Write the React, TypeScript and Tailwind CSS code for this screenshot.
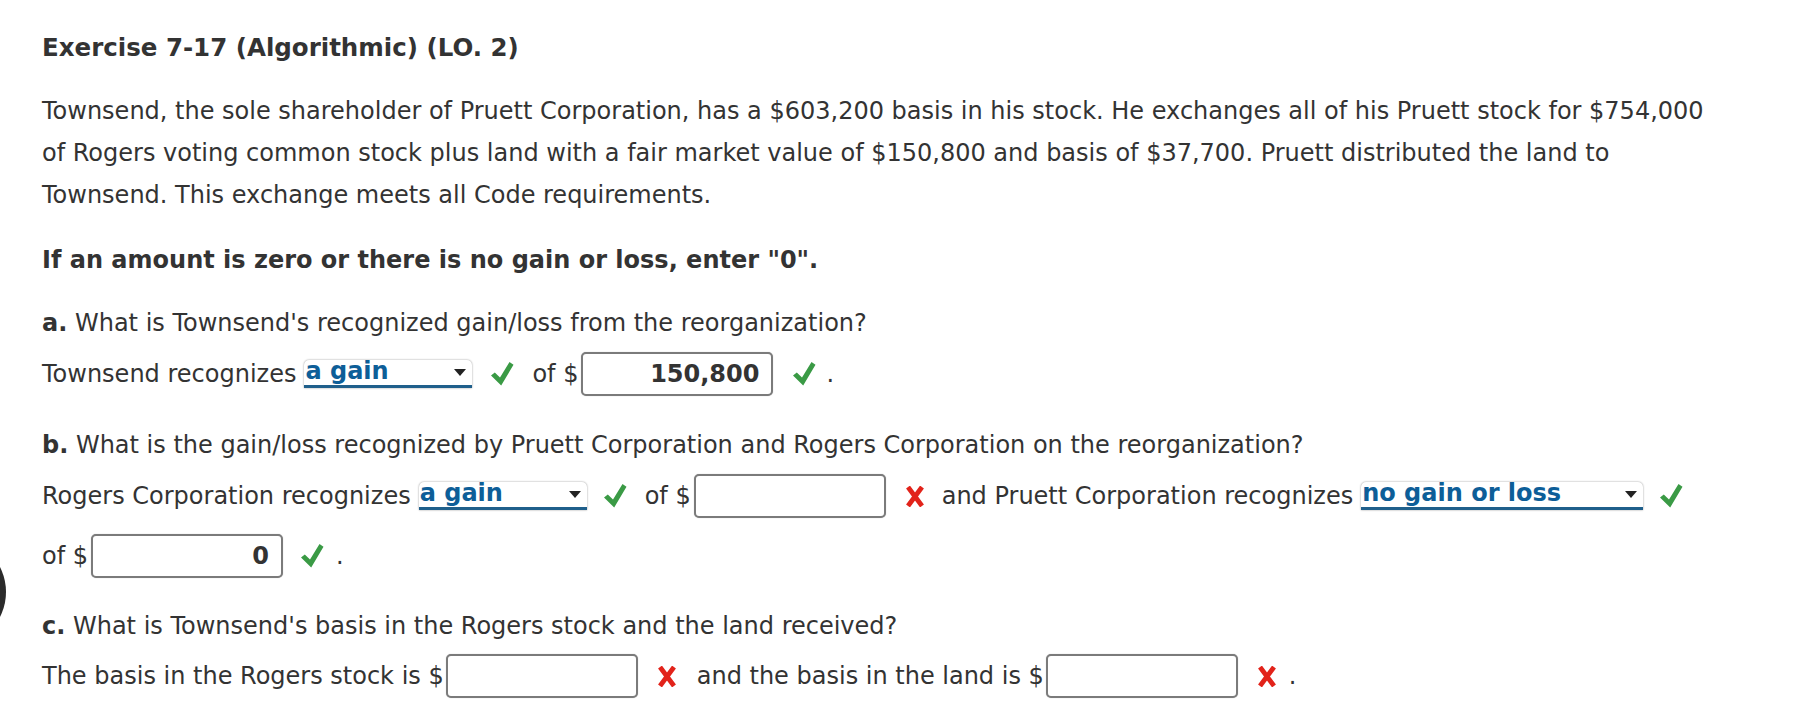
import React from "react";

const font = { fontFamily: '"DejaVu Sans", Verdana, sans-serif' };

function Check() {
  return (
    <svg width="23" height="24" viewBox="0 0 23 24" className="shrink-0">
      <path d="M0 13.5 L3.8 10.5 L9 15.5 L18.5 0 L22.5 2.8 L10.2 23.5 Z" fill="#3a9a45" />
    </svg>
  );
}

function Cross() {
  return (
    <svg width="18" height="21" viewBox="0 0 18 21" className="shrink-0">
      <path d="M2 1 L16 20 M16 1 L2 20" stroke="#e2231a" strokeWidth="4.8" />
    </svg>
  );
}

function Select({ value, width }: { value: string; width: string }) {
  return (
    <div
      className={`relative ${width} h-[28px] bg-white rounded-t-[5px] shadow-[0_0_2px_rgba(0,0,0,0.45)] border-b-[3px] border-[#1f5f8b] flex items-center pl-[1px]`}
    >
      <span className="font-bold text-[#0d5e98] text-[24px] leading-none -mt-[3px]">{value}</span>
      <span className="absolute right-[6px] top-[9px] w-0 h-0 border-l-[6px] border-r-[6px] border-t-[7px] border-l-transparent border-r-transparent border-t-[#222]" />
    </div>
  );
}

function Amount({ value }: { value?: string }) {
  return (
    <div className="w-[192px] h-[44px] bg-white border-2 border-[#7b7b7b] rounded-[5px] shadow-[0_0_1px_rgba(0,0,0,0.3)] flex items-center justify-end pr-[12px]">
      <span className="font-bold text-[24px] text-[#333]">{value ?? ""}</span>
    </div>
  );
}

export default function App() {
  return (
    <div className="relative bg-white min-h-screen text-[#333] text-[24px]" style={font}>
      {/* cut-off circle at the left edge */}
      <div className="absolute left-[-104px] top-[537px] w-[110px] h-[110px] rounded-full bg-[#2b2b2b]" />

      <div className="w-[1770px] pl-[42px] pr-[45px] pt-[33px]">
        <h1 className="font-bold text-[24.5px] leading-[30px]">Exercise 7-17 (Algorithmic) (LO. 2)</h1>

        <p className="mt-[27px] leading-[42px]">
          Townsend, the sole shareholder of Pruett Corporation, has a $603,200 basis in his stock. He exchanges all
          of his Pruett stock for $754,000 of Rogers voting common stock plus land with a fair market value of
          $150,800 and basis of $37,700. Pruett distributed the land to Townsend. This exchange meets all Code
          requirements.
        </p>

        <p className="mt-[23px] leading-[42px] font-bold">If an amount is zero or there is no gain or loss, enter "0".</p>

        <p className="mt-[21px] leading-[42px]">
          <span className="font-bold">a.</span> What is Townsend's recognized gain/loss from the reorganization?
        </p>
        <div className="mt-[8px] h-[44px] flex items-center">
          <span>Townsend recognizes</span>
          <div className="ml-[8px]">
            <Select value="a gain" width="w-[168px]" />
          </div>
          <span className="ml-[19px]">
            <Check />
          </span>
          <span className="ml-[18px]">of $</span>
          <div className="ml-[3px]">
            <Amount value="150,800" />
          </div>
          <span className="ml-[20px]">
            <Check />
          </span>
          <span className="ml-[10px]">.</span>
        </div>

        <p className="mt-[28px] leading-[42px]">
          <span className="font-bold">b.</span> What is the gain/loss recognized by Pruett Corporation and Rogers
          Corporation on the reorganization?
        </p>
        <div className="mt-[8px] flex flex-wrap items-center gap-y-[16px]">
          <div className="h-[44px] flex items-center">
            <span>Rogers Corporation recognizes</span>
            <div className="ml-[8px]">
              <Select value="a gain" width="w-[168px]" />
            </div>
            <span className="ml-[17px]">
              <Check />
            </span>
            <span className="ml-[18px]">of $</span>
            <div className="ml-[3px]">
              <Amount />
            </div>
            <span className="ml-[20px]">
              <Cross />
            </span>
            <span className="ml-[18px]">and Pruett Corporation recognizes</span>
            <div className="ml-[8px]">
              <Select value="no gain or loss" width="w-[282px]" />
            </div>
            <span className="ml-[17px]">
              <Check />
            </span>
          </div>
          <div className="h-[44px] flex items-center">
            <span>of $</span>
            <div className="ml-[3px]">
              <Amount value="0" />
            </div>
            <span className="ml-[18px]">
              <Check />
            </span>
            <span className="ml-[12px]">.</span>
          </div>
        </div>

        <p className="mt-[27px] leading-[42px]">
          <span className="font-bold">c.</span> What is Townsend's basis in the Rogers stock and the land received?
        </p>
        <div className="mt-[6px] h-[46px] flex items-center">
          <span>The basis in the Rogers stock is $</span>
          <div className="ml-[2px]">
            <Amount />
          </div>
          <span className="ml-[20px]">
            <Cross />
          </span>
          <span className="ml-[21px]">and the basis in the land is $</span>
          <div className="ml-[2px]">
            <Amount />
          </div>
          <span className="ml-[20px]">
            <Cross />
          </span>
          <span className="ml-[13px]">.</span>
        </div>
      </div>
    </div>
  );
}
